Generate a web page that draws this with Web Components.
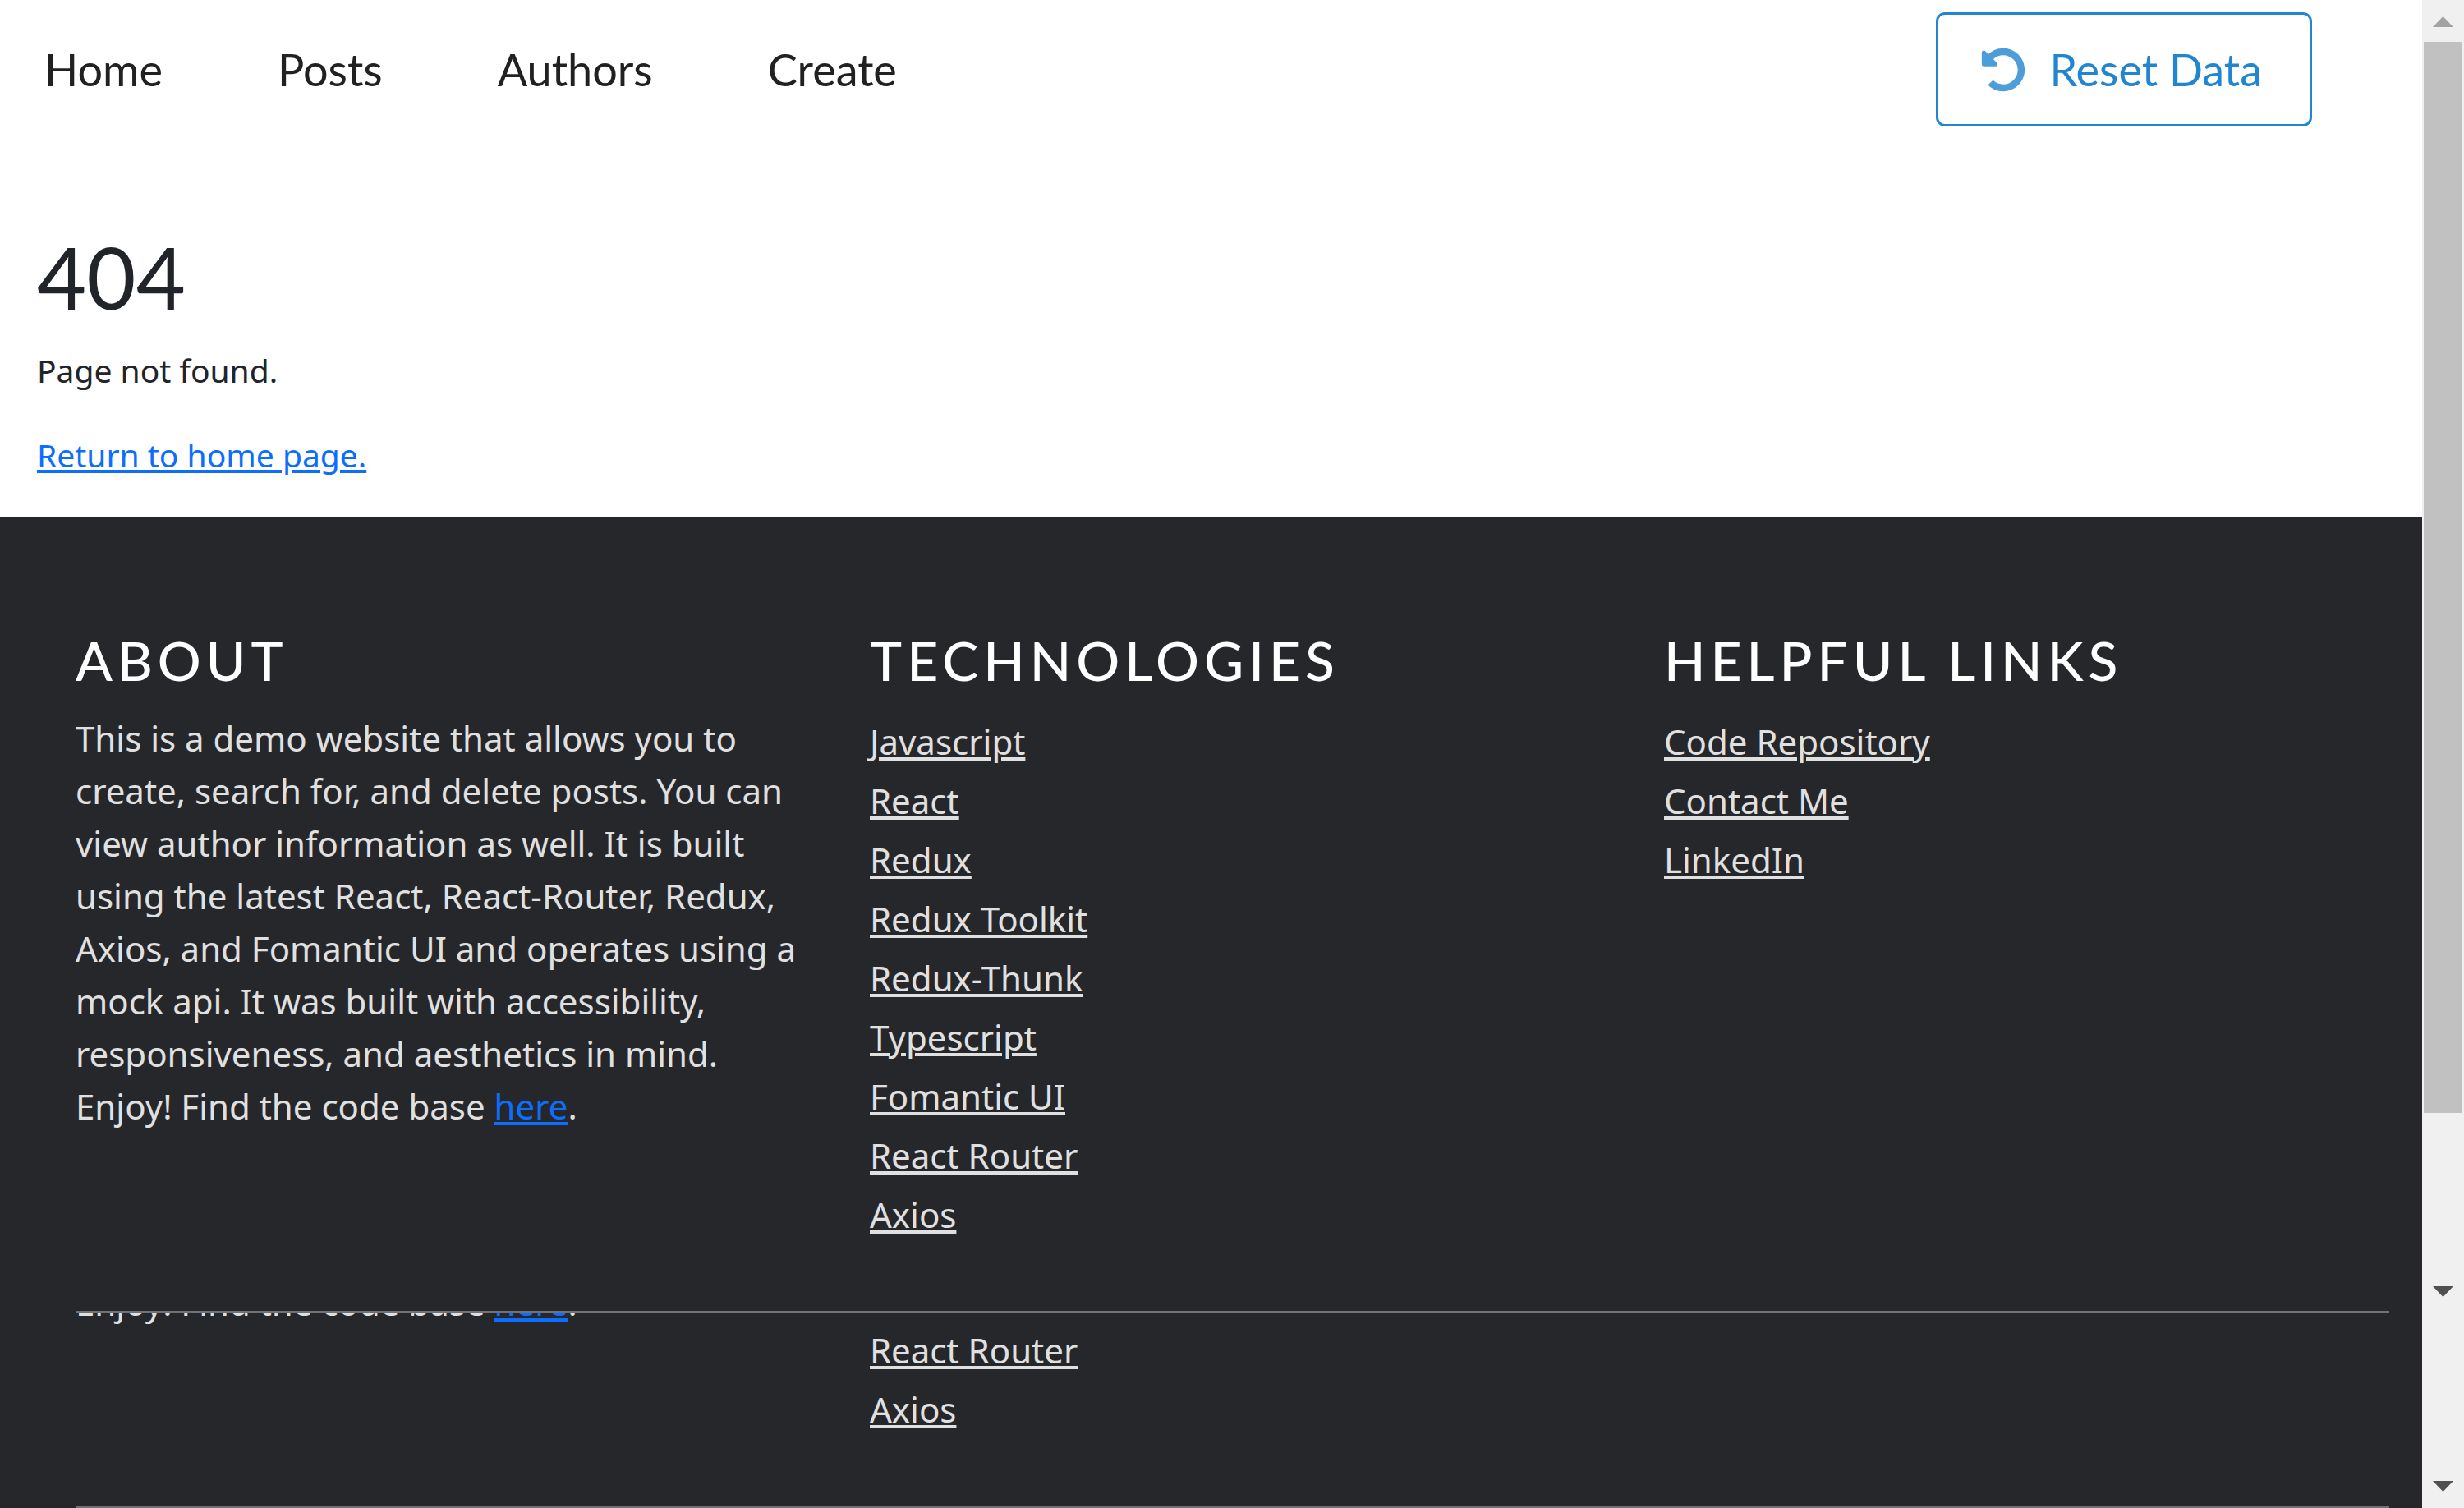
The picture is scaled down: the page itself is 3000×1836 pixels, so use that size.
<!DOCTYPE html>
<html lang="en">
<head>
<meta charset="utf-8">
<title>404</title>
<style>
  body {
    margin: 0;
    background: #fff;
    color: #212529;
    font: 39px/64px "Noto Sans", sans-serif;
    --heading-font: Lato, sans-serif;
    --link: #0d6efd;
    --dark: #26272b;
  }
</style>
</head>
<body>
<page-shell>
  <site-header>
    <nav-link href="#home">Home</nav-link>
    <nav-link href="#posts">Posts</nav-link>
    <nav-link href="#authors">Authors</nav-link>
    <nav-link href="#create">Create</nav-link>
    <reset-button slot="action">Reset Data</reset-button>
  </site-header>
  <not-found></not-found>
  <site-footer>
    <footer-column heading="About">
      <footer-text>This is a demo website that allows you to create, search for, and delete posts. You can view author information as well. It is built using the latest React, React-Router, Redux, Axios, and Fomantic UI and operates using a mock api. It was built with accessibility, responsiveness, and aesthetics in mind. Enjoy! Find the code base</footer-text>
    </footer-column>
    <footer-column heading="Technologies">
      <footer-links items="Javascript|React|Redux|Redux Toolkit|Redux-Thunk|Typescript|Fomantic UI|React Router|Axios"></footer-links>
    </footer-column>
    <footer-column heading="Helpful Links">
      <footer-links items="Code Repository|Contact Me|LinkedIn"></footer-links>
    </footer-column>
  </site-footer>
  <site-footer tail>
    <footer-column>
      <footer-text>Enjoy! Find the code base</footer-text>
    </footer-column>
    <footer-column>
      <footer-links items="React Router|Axios"></footer-links>
    </footer-column>
  </site-footer>
  <scroll-track slot="scrollbar"></scroll-track>
</page-shell>

<script>
const define = (name, html, setup) => {
  const template = document.createElement('template');
  template.innerHTML = html;
  customElements.define(name, class extends HTMLElement {
    constructor() {
      super();
      this.attachShadow({ mode: 'open' }).append(template.content.cloneNode(true));
    }
    connectedCallback() {
      if (setup) setup(this, this.shadowRoot);
    }
  });
};

define('page-shell', `
  <style>
    :host { display: flex; align-items: stretch; }
    main { flex: 1; min-width: 0; }
  </style>
  <main><slot></slot></main>
  <slot name="scrollbar"></slot>
`);

define('site-header', `
  <style>
    :host { display: block; }
    header { display: flex; align-items: center; justify-content: space-between; padding: 15px 134px 0 54px; }
    nav { display: flex; gap: 140px; }
  </style>
  <header>
    <nav><slot></slot></nav>
    <slot name="action"></slot>
  </header>
`);

define('nav-link', `
  <style>
    :host { display: block; }
    a { display: block; color: #212121; font: 54px/65px var(--heading-font); text-decoration: none; }
  </style>
  <a><slot></slot></a>
`, (host, root) => { root.querySelector('a').href = host.getAttribute('href'); });

define('reset-button', `
  <style>
    :host { display: block; }
    button {
      display: flex; align-items: center; gap: 29px; margin: 0; padding: 34px 58px 34px 52px;
      border: 3px solid #2185d0; border-radius: 11px; background: none; color: #2185d0;
      font: 54px/65px var(--heading-font);
    }
    svg { width: 54px; height: 54px; fill: currentColor; opacity: .8; }
  </style>
  <button type="button">
    <svg viewBox="0 0 512 512" aria-hidden="true"><path d="M255.545 8c-66.269.119-126.438 26.233-170.86 68.685L48.971 40.971C33.851 25.851 8 36.559 8 57.941V192c0 13.255 10.745 24 24 24h134.059c21.382 0 32.09-25.851 16.971-40.971l-41.75-41.75c30.864-28.899 70.801-44.907 113.23-45.273 92.398-.798 170.283 73.977 169.484 169.442C423.236 348.009 349.816 424 256 424c-41.127 0-79.997-14.678-110.63-41.556-4.743-4.161-11.906-3.908-16.368.553L89.34 422.659c-4.872 4.872-4.631 12.815.482 17.433C133.798 479.813 192.074 504 256 504c136.966 0 247.999-111.033 247.999-247.998C504 119.193 392.354 7.755 255.545 8z"/></svg>
    <span><slot></slot></span>
  </button>
`);

define('not-found', `
  <style>
    :host { display: block; padding: 120px 45px 43px; }
    h1 { margin: 0 0 20px; font: 104px/125px var(--heading-font); }
    p { margin: 0 0 39px; }
    p:last-child { margin-bottom: 0; }
    a { color: var(--link); text-decoration-thickness: 4px; text-underline-offset: 3px; }
  </style>
  <h1>404</h1>
  <p>Page not found.</p>
  <p><a href="#home">Return to home page.</a></p>
`);

define('site-footer', `
  <style>
    :host { display: block; overflow: hidden; background: var(--dark); color: #e0e0e0; font-size: 42px; }
    .columns { display: grid; grid-template-columns: repeat(3, 1fr); gap: 66px; padding: 135px 22px 81px 92px; }
    :host([tail]) .columns { padding-top: 9px; }
    hr { height: 3px; margin: 0 40px 0 92px; border: 0; background: #707174; }
  </style>
  <footer>
    <div class="columns"><slot></slot></div>
    <hr>
  </footer>
`);

define('footer-column', `
  <style>
    :host { display: block; min-width: 0; }
    h2 { margin: 0 0 24px; color: #fff; font: 500 66px/79px var(--heading-font); letter-spacing: 6px; text-transform: uppercase; }
  </style>
  <slot></slot>
`, (host, root) => {
  const heading = host.getAttribute('heading');
  if (!heading || root.querySelector('h2')) return;
  const h2 = document.createElement('h2');
  h2.textContent = heading;
  root.querySelector('slot').before(h2);
});

define('footer-text', `
  <style>
    :host { display: block; }
    :host-context([tail]) { margin-top: -54px; }
    p { margin: 0; }
    a { color: var(--link); text-decoration-thickness: 4px; text-underline-offset: 3px; }
  </style>
  <p><slot></slot> <a href="#code">here</a>.</p>
`);

define('footer-links', `
  <style>
    :host { display: block; }
    ul { margin: 0; padding: 0; list-style: none; line-height: 72px; }
    a { color: inherit; text-decoration-thickness: 4px; text-underline-offset: 3px; }
  </style>
  <ul></ul>
`, (host, root) => {
  root.querySelector('ul').replaceChildren(...host.getAttribute('items').split('|').map(text => {
    const li = document.createElement('li');
    const a = document.createElement('a');
    a.href = '#' + text.toLowerCase().replace(/ /g, '-');
    a.textContent = text;
    li.append(a);
    return li;
  }));
});

define('scroll-track', `
  <style>
    :host { display: flex; flex-direction: column; flex: none; width: 51px; background: #f0f0f0; }
    svg { display: block; width: 51px; height: 51px; fill: #505050; }
    .up { fill: #a3a3a3; }
    .thumb { height: 1304px; margin: 0 2px; background: #c1c1c1; }
    .space { flex: 1; }
    .rest { height: 186px; }
  </style>
  <svg class="up" viewBox="0 0 51 51"><path d="M13 33h25L25.500 20z"/></svg>
  <div class="thumb"></div>
  <div class="space"></div>
  <svg viewBox="0 0 51 51"><path d="M13 18h25L25.500 31z"/></svg>
  <div class="rest"></div>
  <svg viewBox="0 0 51 51"><path d="M13 18h25L25.500 31z"/></svg>
`);
</script>
</body>
</html>
